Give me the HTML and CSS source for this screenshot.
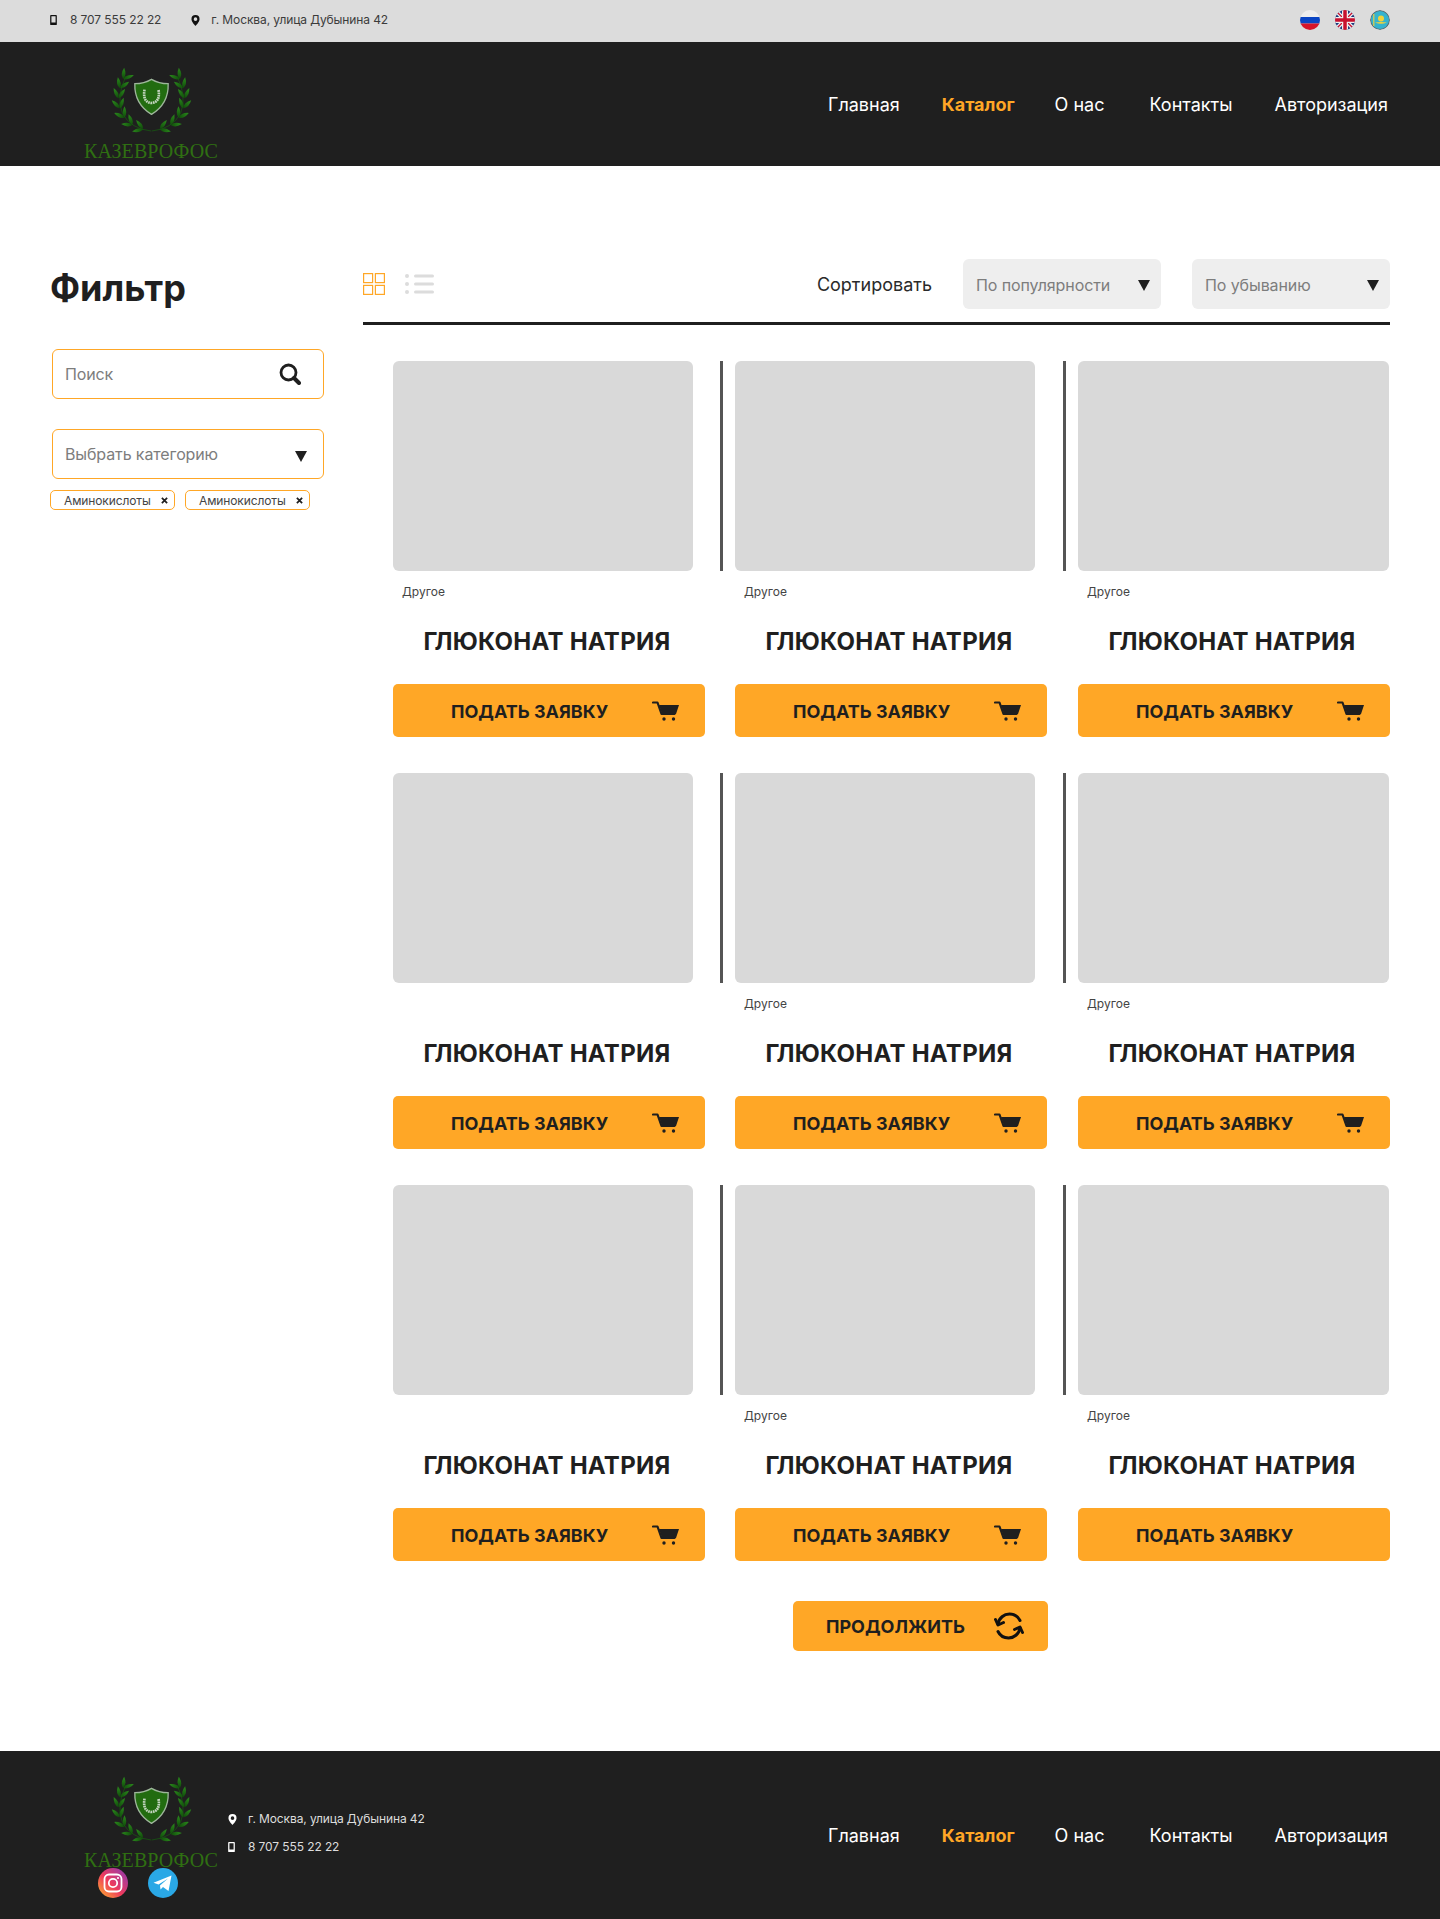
FILE: index.html
```html
<!DOCTYPE html>
<html lang="ru">
<head>
<meta charset="utf-8">
<title>Каталог</title>
<link rel="stylesheet" href="styles.css">
</head>
<body>
<svg class="sprites" aria-hidden="true">
  <defs>
    <linearGradient id="leafg" x1="0" y1="0" x2="1" y2="0">
      <stop offset="0" stop-color="#0f4a0a"/><stop offset="1" stop-color="#2b8a1c"/>
    </linearGradient>
    <linearGradient id="insta" x1="0" y1="1" x2="1" y2="0">
      <stop offset="0" stop-color="#fdb92c"/><stop offset=".45" stop-color="#ee3a5c"/><stop offset="1" stop-color="#8a3ab9"/>
    </linearGradient>
    <path id="leaf" d="M0 0Q14-11 34 0Q14 11 0 0Z" fill="url(#leafg)"/>
    <g id="branch">
      <use href="#leaf" transform="translate(96 186) rotate(167)"/><use href="#leaf" transform="translate(96 186) rotate(232)"/>
      <use href="#leaf" transform="translate(64 174) rotate(185)"/><use href="#leaf" transform="translate(64 174) rotate(250)"/>
      <use href="#leaf" transform="translate(40 152) rotate(205)"/><use href="#leaf" transform="translate(40 152) rotate(270)"/>
      <use href="#leaf" transform="translate(26 124) rotate(225)"/><use href="#leaf" transform="translate(26 124) rotate(290)"/>
      <use href="#leaf" transform="translate(22 94) rotate(245)"/><use href="#leaf" transform="translate(22 94) rotate(305)"/>
      <use href="#leaf" transform="translate(26 64) rotate(260)"/><use href="#leaf" transform="translate(26 64) rotate(325)"/>
      <use href="#leaf" transform="translate(36 36) rotate(275)"/><use href="#leaf" transform="translate(36 36) rotate(340)"/>
      <path d="M120 192Q60 186 34 140Q14 90 44 28" fill="none" stroke="#17600f" stroke-width="2"/>
    </g>
    <symbol id="logo" viewBox="0 0 242 195" overflow="visible">
      <use href="#branch"/>
      <use href="#branch" transform="translate(242 0) scale(-1 1)"/>
      <path d="M121 37Q143 50 171 50Q173 110 121 142Q69 110 71 50Q99 50 121 37Z" fill="#226c10" stroke="#9db69a" stroke-width="4"/>
      <path d="M100 68Q94 106 121 108Q148 106 142 68" fill="none" stroke="#c3d4bf" stroke-width="8" stroke-dasharray="5 2"/>
    </symbol>
    <symbol id="phone" viewBox="0 0 8 12">
      <path fill-rule="evenodd" d="M1 0h6a1 1 0 0 1 1 1v10a1 1 0 0 1-1 1H1a1 1 0 0 1-1-1V1a1 1 0 0 1 1-1ZM1.500 1.500v7.500h5V1.500Z" fill="currentColor"/>
    </symbol>
    <symbol id="pin" viewBox="0 0 10 12">
      <path fill-rule="evenodd" d="M5 0a4.500 4.500 0 0 1 4.500 4.500C9.500 7.500 5 12 5 12S.5 7.500.5 4.500A4.500 4.500 0 0 1 5 0ZM5 2.500a2 2 0 1 0 0 4a2 2 0 0 0 0-4Z" fill="currentColor"/>
    </symbol>
    <symbol id="cart" viewBox="0 0 27 20">
      <path d="M1 1.500h4.500L9.500 13h13" fill="none" stroke="currentColor" stroke-width="2.200" stroke-linecap="round" stroke-linejoin="round"/>
      <path d="M7 4h20l-3 9H10Z" fill="currentColor"/>
      <circle cx="12" cy="18" r="1.700" fill="currentColor"/><circle cx="21.500" cy="18" r="1.700" fill="currentColor"/>
    </symbol>
    <symbol id="caret" viewBox="0 0 12 11"><path d="M0 0h12L6 11Z" fill="currentColor"/></symbol>
    <symbol id="close" viewBox="0 0 8 8"><path d="M1 1l6 6M7 1L1 7" stroke="currentColor" stroke-width="2" fill="none"/></symbol>
  </defs>
</svg>

<div class="topbar">
  <div class="contacts">
    <span class="contact"><svg class="ico-phone"><use href="#phone"/></svg>8 707 555 22 22</span>
    <span class="contact"><svg class="ico-pin"><use href="#pin"/></svg>г. Москва, улица Дубынина 42</span>
  </div>
  <div class="flags">
    <svg class="flag" viewBox="0 0 20 20"><rect width="20" height="7" fill="#eeeeee"/><rect y="7" width="20" height="6.500" fill="#0b45c4"/><rect y="13.500" width="20" height="6.500" fill="#d6132a"/></svg>
    <svg class="flag" viewBox="0 0 20 20"><rect width="20" height="20" fill="#1a3a7c"/><path d="M0 0L20 20M20 0L0 20" stroke="#e9e9ef" stroke-width="4"/><path d="M0 0L20 20M20 0L0 20" stroke="#c8102e" stroke-width="1.300"/><path d="M10 0V20M0 10H20" stroke="#eeeeee" stroke-width="6"/><path d="M10 0V20M0 10H20" stroke="#c8102e" stroke-width="3.500"/></svg>
    <svg class="flag" viewBox="0 0 20 20"><circle cx="10" cy="10" r="10" fill="#5d6b70"/><circle cx="10" cy="10" r="9" fill="#35b3cf"/><circle cx="11" cy="8.500" r="3" fill="#f2d33a"/><path d="M5 12.500Q11 15 17 12.500Q11 11.500 5 12.500Z" fill="#f2d33a"/><rect x="3.200" y="4" width="1.200" height="12" fill="#e6cf47"/></svg>
  </div>
</div>

<header class="site-head">
  <a class="brand">
    <svg class="brand-mark"><use href="#logo"/></svg>
    <span class="brand-name">КАЗЕВРОФОС</span>
  </a>
  <nav class="nav">
    <a>Главная</a><a class="is-active">Каталог</a><a>О нас</a><a>Контакты</a><a>Авторизация</a>
  </nav>
</header>

<main class="layout">
  <aside class="filter">
    <h1>Фильтр</h1>
    <div class="field field-search">
      <span>Поиск</span>
      <svg class="ico-search" viewBox="0 0 22 22"><circle cx="9.500" cy="9.500" r="7.500" fill="none" stroke="currentColor" stroke-width="2.800"/><path d="M15 15l5 5" stroke="currentColor" stroke-width="4" stroke-linecap="round"/></svg>
    </div>
    <div class="field field-cat">
      <span>Выбрать категорию</span>
      <svg class="ico-caret"><use href="#caret"/></svg>
    </div>
    <div class="chips">
      <span class="chip">Аминокислоты<svg class="ico-close"><use href="#close"/></svg></span>
      <span class="chip">Аминокислоты<svg class="ico-close"><use href="#close"/></svg></span>
    </div>
  </aside>

  <section class="catalog">
    <div class="toolbar">
      <div class="views">
        <svg class="view-grid" viewBox="0 0 22 22"><g fill="none" stroke="#ffa726" stroke-width="1.200"><rect x=".6" y=".6" width="9" height="9"/><rect x="12.400" y=".6" width="9" height="9"/><rect x=".6" y="12.400" width="9" height="9"/><rect x="12.400" y="12.400" width="9" height="9"/></g></svg>
        <svg class="view-list" viewBox="0 0 29 22"><g fill="#dcdcdc"><circle cx="2" cy="3" r="2"/><circle cx="2" cy="11" r="2"/><circle cx="2" cy="19" r="2"/><rect x="9" y="1.500" width="20" height="3" rx="1.500"/><rect x="9" y="9.500" width="20" height="3" rx="1.500"/><rect x="9" y="17.500" width="20" height="3" rx="1.500"/></g></svg>
      </div>
      <div class="sort">
        <span class="sort-label">Сортировать</span>
        <div class="select"><span>По популярности</span><svg class="ico-caret"><use href="#caret"/></svg></div>
        <div class="select"><span>По убыванию</span><svg class="ico-caret"><use href="#caret"/></svg></div>
      </div>
    </div>

    <div class="grid">
      <article class="card"><div class="thumb-row"><i class="rule"></i><div class="thumb"></div></div><p class="cat">Другое</p><h2>ГЛЮКОНАТ НАТРИЯ</h2><a class="btn"><span>ПОДАТЬ ЗАЯВКУ</span><svg class="ico-cart"><use href="#cart"/></svg></a></article>
      <article class="card"><div class="thumb-row"><i class="rule"></i><div class="thumb"></div></div><p class="cat">Другое</p><h2>ГЛЮКОНАТ НАТРИЯ</h2><a class="btn"><span>ПОДАТЬ ЗАЯВКУ</span><svg class="ico-cart"><use href="#cart"/></svg></a></article>
      <article class="card"><div class="thumb-row"><i class="rule"></i><div class="thumb"></div></div><p class="cat">Другое</p><h2>ГЛЮКОНАТ НАТРИЯ</h2><a class="btn"><span>ПОДАТЬ ЗАЯВКУ</span><svg class="ico-cart"><use href="#cart"/></svg></a></article>

      <article class="card"><div class="thumb-row"><i class="rule"></i><div class="thumb"></div></div><p class="cat"></p><h2>ГЛЮКОНАТ НАТРИЯ</h2><a class="btn"><span>ПОДАТЬ ЗАЯВКУ</span><svg class="ico-cart"><use href="#cart"/></svg></a></article>
      <article class="card"><div class="thumb-row"><i class="rule"></i><div class="thumb"></div></div><p class="cat">Другое</p><h2>ГЛЮКОНАТ НАТРИЯ</h2><a class="btn"><span>ПОДАТЬ ЗАЯВКУ</span><svg class="ico-cart"><use href="#cart"/></svg></a></article>
      <article class="card"><div class="thumb-row"><i class="rule"></i><div class="thumb"></div></div><p class="cat">Другое</p><h2>ГЛЮКОНАТ НАТРИЯ</h2><a class="btn"><span>ПОДАТЬ ЗАЯВКУ</span><svg class="ico-cart"><use href="#cart"/></svg></a></article>

      <article class="card"><div class="thumb-row"><i class="rule"></i><div class="thumb"></div></div><p class="cat"></p><h2>ГЛЮКОНАТ НАТРИЯ</h2><a class="btn"><span>ПОДАТЬ ЗАЯВКУ</span><svg class="ico-cart"><use href="#cart"/></svg></a></article>
      <article class="card"><div class="thumb-row"><i class="rule"></i><div class="thumb"></div></div><p class="cat">Другое</p><h2>ГЛЮКОНАТ НАТРИЯ</h2><a class="btn"><span>ПОДАТЬ ЗАЯВКУ</span><svg class="ico-cart"><use href="#cart"/></svg></a></article>
      <article class="card"><div class="thumb-row"><i class="rule"></i><div class="thumb"></div></div><p class="cat">Другое</p><h2>ГЛЮКОНАТ НАТРИЯ</h2><a class="btn"><span>ПОДАТЬ ЗАЯВКУ</span></a></article>

      <a class="more"><span>ПРОДОЛЖИТЬ</span>
        <svg class="ico-refresh" viewBox="0 0 30 30"><g fill="none" stroke="currentColor" stroke-width="3" stroke-linecap="round" stroke-linejoin="round"><path d="M4 13C5 7 10 3 15.500 3C20 3 24 5.500 26 9.500"/><path d="M26 17C25 23 20 27 14.500 27C10 27 6 24.500 4 20.500"/><path d="M1.500 8.500L4 14L9.500 11.500"/><path d="M28.500 21.500L26 16L20.500 18.500"/></g></svg>
      </a>
    </div>
  </section>
</main>

<footer class="site-foot">
  <div class="foot-left">
    <div class="foot-brand">
      <a class="brand">
        <svg class="brand-mark"><use href="#logo"/></svg>
        <span class="brand-name">КАЗЕВРОФОС</span>
      </a>
      <div class="socials">
        <svg class="social" viewBox="0 0 30 30"><circle cx="15" cy="15" r="15" fill="url(#insta)"/><rect x="6.500" y="6.500" width="17" height="17" rx="4.500" fill="none" stroke="#fff" stroke-width="1.800"/><circle cx="15" cy="15" r="4.200" fill="none" stroke="#fff" stroke-width="1.800"/><circle cx="20" cy="10" r="1.100" fill="#fff"/></svg>
        <svg class="social" viewBox="0 0 30 30"><circle cx="15" cy="15" r="15" fill="#2aa8e6"/><path d="M5.500 14.800L23.500 7.500L20.500 23L15 19L12.500 21.500L12 17.500L20 10.500L10.500 16.500Z" fill="#fff"/></svg>
      </div>
    </div>
    <div class="foot-contacts">
      <span class="contact"><svg class="ico-pin"><use href="#pin"/></svg>г. Москва, улица Дубынина 42</span>
      <span class="contact"><svg class="ico-phone"><use href="#phone"/></svg>8 707 555 22 22</span>
    </div>
  </div>
  <nav class="nav">
    <a>Главная</a><a class="is-active">Каталог</a><a>О нас</a><a>Контакты</a><a>Авторизация</a>
  </nav>
</footer>
</body>
</html>
```

FILE: styles.css
```css
* { box-sizing: border-box; }
html, body { margin: 0; padding: 0; }
body {
  font-family: Inter, "Liberation Sans", sans-serif;
  color: #1f1f1f;
  background: #fff;
}
.sprites { position: absolute; width: 0; height: 0; overflow: hidden; }

/* top bar */
.topbar {
  height: 42px;
  background: #dcdcdc;
  display: flex;
  align-items: center;
  justify-content: space-between;
  padding: 0 50px 2px 50px;
}
.contacts { display: flex; gap: 30px; font-size: 12px; letter-spacing: -0.1px; color: #3b3b3b; }
.contact { display: inline-flex; align-items: center; line-height: 16px; }
.ico-phone { width: 7px; height: 10px; margin-right: 13px; color: #111; flex: none; }
.ico-pin { width: 9px; height: 11px; margin-right: 11px; color: #111; flex: none; }
.flags { display: flex; gap: 15px; }
.flag { width: 20px; height: 20px; border-radius: 50%; display: block; }

/* header */
.site-head {
  height: 124px;
  background: #1f1f1f;
  display: flex;
  align-items: flex-start;
  justify-content: space-between;
  padding: 0 50px 0 84px;
}
.brand { display: flex; flex-direction: column; width: 134px; align-items: center; padding-top: 25px; }
.brand-mark { width: 81px; height: 65px; display: block; overflow: visible; }
.brand-name {
  font-family: "Liberation Serif", serif;
  font-size: 20px;
  line-height: 24px;
  margin-top: 7px;
  letter-spacing: 0.1px;
  color: #2f6f12;
  white-space: nowrap;
}
.nav { display: flex; gap: 42px; font-size: 18px; line-height: 24px; color: #fff; padding: 51px 2px 0 0; }
.nav a:nth-child(2) { margin-right: -2px; }
.nav a:nth-child(3) { margin-right: 3px; }
.nav .is-active { color: #ffa726; font-weight: 700; }

/* main layout */
.layout { display: flex; padding: 93px 50px 100px 50px; }
.filter { width: 313px; flex: none; }
.filter h1 { margin: 7px 0 0; font-size: 36px; line-height: 44px; font-weight: 700; }
.field {
  width: 272px;
  height: 50px;
  margin-left: 2px;
  border: 1px solid #ffa726;
  border-radius: 6px;
  display: flex;
  align-items: center;
  justify-content: space-between;
  padding: 0 16px 0 12px;
  font-size: 16px;
  letter-spacing: -0.12px;
  color: #7d7d7d;
}
.field-search { margin-top: 39px; padding-right: 22px; }
.field-cat { margin-top: 30px; }
.field-cat .ico-caret { margin-top: 4px; }
.ico-search { width: 22px; height: 22px; color: #1f1f1f; }
.ico-caret { width: 12px; height: 11px; color: #1f1f1f; flex: none; margin-top: 2px; }
.chips { display: flex; gap: 10px; margin-top: 11px; }
.chip {
  width: 125px;
  height: 20px;
  border: 1px solid #ffa726;
  border-radius: 5px;
  display: flex;
  align-items: center;
  justify-content: space-between;
  padding: 0 6px 0 13px;
  font-size: 12px;
  letter-spacing: -0.01em;
  color: #444;
}
.ico-close { width: 7px; height: 7px; color: #1f1f1f; flex: none; }

/* catalog */
.catalog { flex: 1; min-width: 0; }
.toolbar {
  display: flex;
  align-items: flex-start;
  justify-content: space-between;
  height: 66px;
  padding-bottom: 13px;
  border-bottom: 3px solid #1f1f1f;
}
.views { display: flex; gap: 20px; padding-top: 14px; }
.view-grid { width: 22px; height: 22px; display: block; }
.view-list { width: 29px; height: 22px; display: block; }
.sort { display: flex; align-items: center; gap: 31px; height: 50px; }
.sort-label { font-size: 18px; color: #2a2a2a; padding-top: 1px; }
.select {
  width: 198px;
  height: 50px;
  background: #eeeeee;
  border-radius: 6px;
  display: flex;
  align-items: center;
  justify-content: space-between;
  padding: 1px 11px 0 13px;
  font-size: 16px;
  letter-spacing: -0.1px;
  color: #7d7d7d;
}
.grid {
  display: grid;
  grid-template-columns: repeat(3, 312px);
  column-gap: 30px;
  row-gap: 36px;
  padding: 36px 0 0 30px;
}
.thumb-row { display: flex; gap: 12px; margin-left: -15px; }
.rule { width: 3px; height: 210px; background: #555; flex: none; }
.card:nth-child(3n+1) .rule { visibility: hidden; }
.thumb { width: 300px; height: 210px; background: #d9d9d9; border-radius: 6px; }
.card:nth-child(3n) { margin-left: 1px; width: 312px; }
.card:nth-child(3n) .thumb { width: 311px; }
.cat {
  margin: 13px 0 0;
  padding-left: 9px;
  height: 16px;
  font-size: 12px;
  line-height: 16px;
  color: #444;
}
.card h2 {
  margin: 27px 0 0;
  padding-right: 4px;
  font-size: 24px;
  line-height: 30px;
  font-weight: 700;
  letter-spacing: 0.25px;
  text-align: center;
  white-space: nowrap;
}
.btn {
  margin-top: 27px;
  height: 53px;
  background: #ffa726;
  border-radius: 5px;
  display: flex;
  align-items: center;
  justify-content: space-between;
  padding: 1px 26px 0 58px;
  font-size: 18px;
  font-weight: 700;
  color: #1f1f1f;
}
.ico-cart { width: 27px; height: 20px; color: #1f1f1f; display: block; }
.more {
  grid-column: 2;
  justify-self: end;
  margin: 4px -1px 0 0;
  width: 255px;
  height: 50px;
  background: #ffa726;
  border-radius: 5px;
  display: flex;
  align-items: center;
  justify-content: space-between;
  padding: 0 24px 0 33px;
  font-size: 18px;
  font-weight: 700;
  color: #1f1f1f;
}
.ico-refresh { width: 30px; height: 30px; color: #111; display: block; }

/* footer */
.site-foot {
  height: 168px;
  background: #1f1f1f;
  display: flex;
  align-items: flex-start;
  justify-content: space-between;
  padding: 0 50px 0 84px;
}
.foot-left { display: flex; align-items: center; gap: 10px; height: 100%; }
.foot-brand { display: flex; flex-direction: column; align-items: flex-start; align-self: flex-start; }
.socials { display: flex; gap: 20px; margin: -4px 0 0 14px; }
.social { width: 30px; height: 30px; display: block; }
.foot-contacts {
  display: flex;
  flex-direction: column;
  gap: 12px;
  font-size: 12px;
  letter-spacing: -0.1px;
  color: #dddddd;
  margin-top: -4px;
}
.site-foot .ico-phone, .site-foot .ico-pin { color: #fff; }
.site-foot .nav { padding-top: 73px; }
```
